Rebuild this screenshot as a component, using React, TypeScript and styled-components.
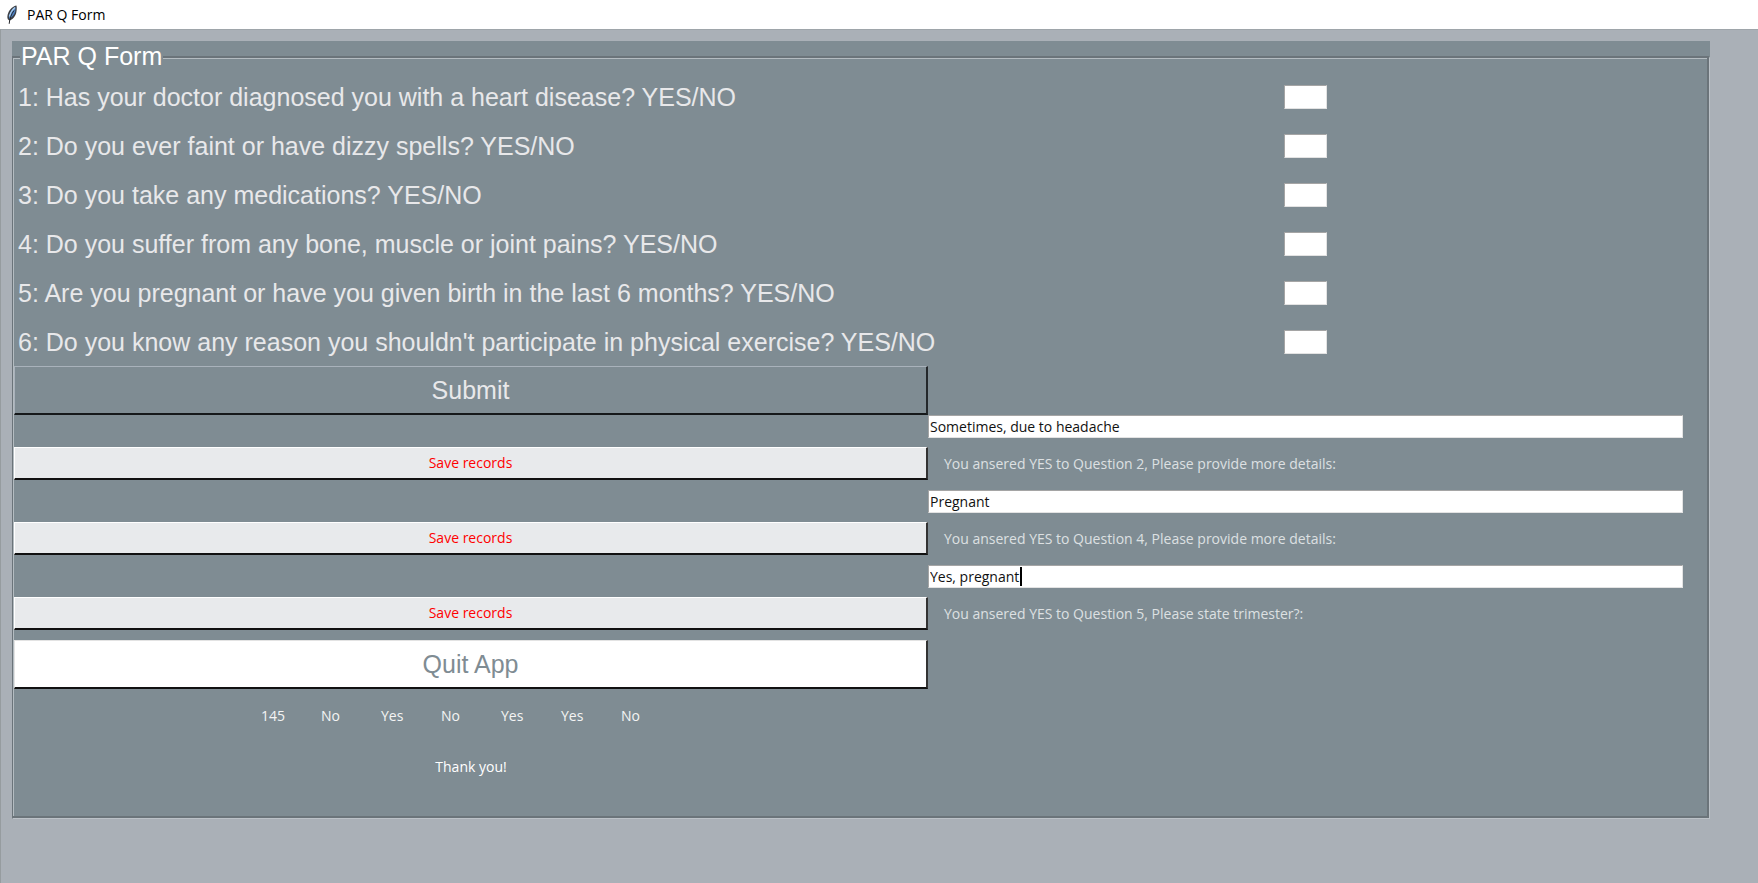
import React from 'react';
import styled, { createGlobalStyle } from 'styled-components';

const slate = '#7f8c93';
const ui = "'Open Sans', 'Noto Sans', sans-serif";
const arial = "'Liberation Sans', Arial, sans-serif";

const GlobalStyle = createGlobalStyle`
  *, *::before, *::after { box-sizing: border-box; }
  body { margin: 0; background: #aab0b7; font-family: ${ui}; }
  button, input { border-radius: 0; outline: none; }
`;

const Window = styled.div`
  display: flex;
  flex-direction: column;
  min-height: 100vh;
`;

const TitleBar = styled.header`
  display: flex;
  align-items: center;
  gap: 8px;
  height: 29px;
  padding-left: 5px;
  background: #fff;
`;

const Title = styled.h1`
  margin: 0;
  font-size: 14px;
  line-height: 20px;
  font-weight: 400;
  color: #000;
`;

const Desktop = styled.main`
  flex: 1;
  padding: 11px 48px 12px 11px;
  border-left: 1px solid #969c9f;
  border-top: 1px solid #9ea5aa;
`;

const Panel = styled.div`
  background: ${slate};
`;

const Frame = styled.fieldset`
  margin: 0;
  padding: 0 1px 26px;
  border: 1px solid;
  border-top-width: 2px;
  border-color: #6b747a #bcc2c8 #bcc2c8 #6b747a;
  box-shadow: inset -2px -2px #6b747a, inset 1px 1px #b4bcc1;
  min-width: 0;
`;

const Legend = styled.legend`
  margin-left: 6px;
  padding: 0 1px;
  background: ${slate};
  font: 25px/31px ${arial};
  color: #fff;
`;

const Row = styled.div`
  display: grid;
  grid-template-columns: minmax(0, 914fr) minmax(0, 755fr);
  align-items: center;
  padding-right: 25px;
`;

const QuestionRow = styled(Row)`
  height: 49px;
`;

const Question = styled.label`
  padding-left: 4px;
  font: 25px/32px ${arial};
  color: #e8e8ea;
  white-space: nowrap;
`;

const Entry = styled.input`
  display: block;
  width: 100%;
  height: 23px;
  padding: 0 1px;
  border: 1px solid;
  border-color: #a5a5a5 #e3e3e3 #e3e3e3 #a5a5a5;
  background: #fff;
  font: 14px/20px ${ui};
  color: #111;
`;

const Answer = styled(Entry)`
  width: 43px;
  height: 24px;
  justify-self: center;
`;

const EntryCell = styled.div`
  grid-column: 2;
  position: relative;
`;

const Caret = styled.span`
  position: absolute;
  top: 2px;
  left: 92px;
  width: 2px;
  height: 19px;
  background: #000;
`;

const Button = styled.button`
  display: block;
  width: 100%;
  padding: 0;
  border-style: solid;
  border-width: 1px 2px 2px 1px;
`;

const SubmitButton = styled(Button)`
  height: 49px;
  background: ${slate};
  border-color: #a9b2bb #24282b #15181a #a9b2bb;
  font: 25px/32px ${arial};
  color: #e8e8ea;
`;

const QuitButton = styled(SubmitButton)`
  background: #fff;
  border-color: #e3e3e3 #333 #111 #e3e3e3;
  color: ${slate};
`;

const SaveButton = styled(Button)`
  height: 33px;
  background: #e8eaec;
  border-color: #fff #333 #111 #fff;
  font: 14px/20px ${ui};
  color: #ff0000;
`;

const SaveRow = styled(Row)`
  padding-top: 9px;
  padding-bottom: 10px;
`;

const DetailLabel = styled.label`
  padding-left: 16px;
  font-size: 14px;
  line-height: 20px;
  color: #dde0e2;
  white-space: nowrap;
`;

const Record = styled.table`
  margin: 0 auto;
  border-collapse: collapse;
  table-layout: fixed;
  font-size: 14px;
  line-height: 20px;
  color: #f4f4f4;

  td { width: 60px; height: 53px; padding: 0; }
`;

const Thanks = styled.p`
  margin: 0;
  font-size: 14px;
  line-height: 50px;
  text-align: center;
  color: #fff;
`;

const questions = [
  '1: Has your doctor diagnosed you with a heart disease? YES/NO',
  '2: Do you ever faint or have dizzy spells? YES/NO',
  '3: Do you take any medications? YES/NO',
  '4: Do you suffer from any bone, muscle or joint pains? YES/NO',
  '5: Are you pregnant or have you given birth in the last 6 months? YES/NO',
  "6: Do you know any reason you shouldn't participate in physical exercise? YES/NO",
];

const details = [
  { id: 'd2', value: 'Sometimes, due to headache', label: 'You ansered YES to Question 2, Please provide more details:' },
  { id: 'd4', value: 'Pregnant', label: 'You ansered YES to Question 4, Please provide more details:' },
  { id: 'd5', value: 'Yes, pregnant', label: 'You ansered YES to Question 5, Please state trimester?:', active: true },
];

const record = ['145', 'No', 'Yes', 'No', 'Yes', 'Yes', 'No'];

const Feather = () => (
  <svg width="14" height="20" viewBox="0 0 14 20" aria-hidden="true">
    <path d="M11.4.6C8.6 1 5 4 3.400 7.500 2.300 10 2 12.500 2.800 14.200L4.300 15.600C7.500 14.600 10.500 11.500 11.300 7.500 11.800 5 12 2 11.400.6Z" fill="#3c3f45" />
    <path d="M10.600 2C8 3.500 5.500 6.500 4.400 10L4 14C7 12.500 9.500 9.500 10.200 6.500Z" fill="#4c83c8" />
    <path d="M10 2.500C7.500 4.500 5.500 7.500 4.300 11.500" fill="none" stroke="#a9cdf0" strokeWidth="1.300" />
    <path d="M9 5.500C6.500 9 4.500 13.500 4.200 18.800" fill="none" stroke="#25272b" strokeWidth="1" />
  </svg>
);

export default function App() {
  return (
    <Window>
      <GlobalStyle />
      <TitleBar>
        <Feather />
        <Title>PAR Q Form</Title>
      </TitleBar>
      <Desktop>
        <Panel>
          <Frame>
            <Legend>PAR Q Form</Legend>
            {questions.map((text, i) => (
              <QuestionRow key={text}>
                <Question htmlFor={`q${i + 1}`}>{text}</Question>
                <Answer id={`q${i + 1}`} type="text" />
              </QuestionRow>
            ))}
            <Row>
              <SubmitButton type="button">Submit</SubmitButton>
            </Row>
            {details.map((d) => (
              <React.Fragment key={d.id}>
                <Row>
                  <EntryCell>
                    <Entry id={d.id} type="text" defaultValue={d.value} />
                    {d.active && <Caret />}
                  </EntryCell>
                </Row>
                <SaveRow>
                  <SaveButton type="button">Save records</SaveButton>
                  <DetailLabel htmlFor={d.id}>{d.label}</DetailLabel>
                </SaveRow>
              </React.Fragment>
            ))}
            <Row>
              <QuitButton type="button">Quit App</QuitButton>
            </Row>
            <Row>
              <Record>
                <tbody>
                  <tr>
                    {record.map((value, i) => (
                      <td key={i}>{value}</td>
                    ))}
                  </tr>
                </tbody>
              </Record>
            </Row>
            <Row>
              <Thanks>Thank you!</Thanks>
            </Row>
          </Frame>
        </Panel>
      </Desktop>
    </Window>
  );
}
